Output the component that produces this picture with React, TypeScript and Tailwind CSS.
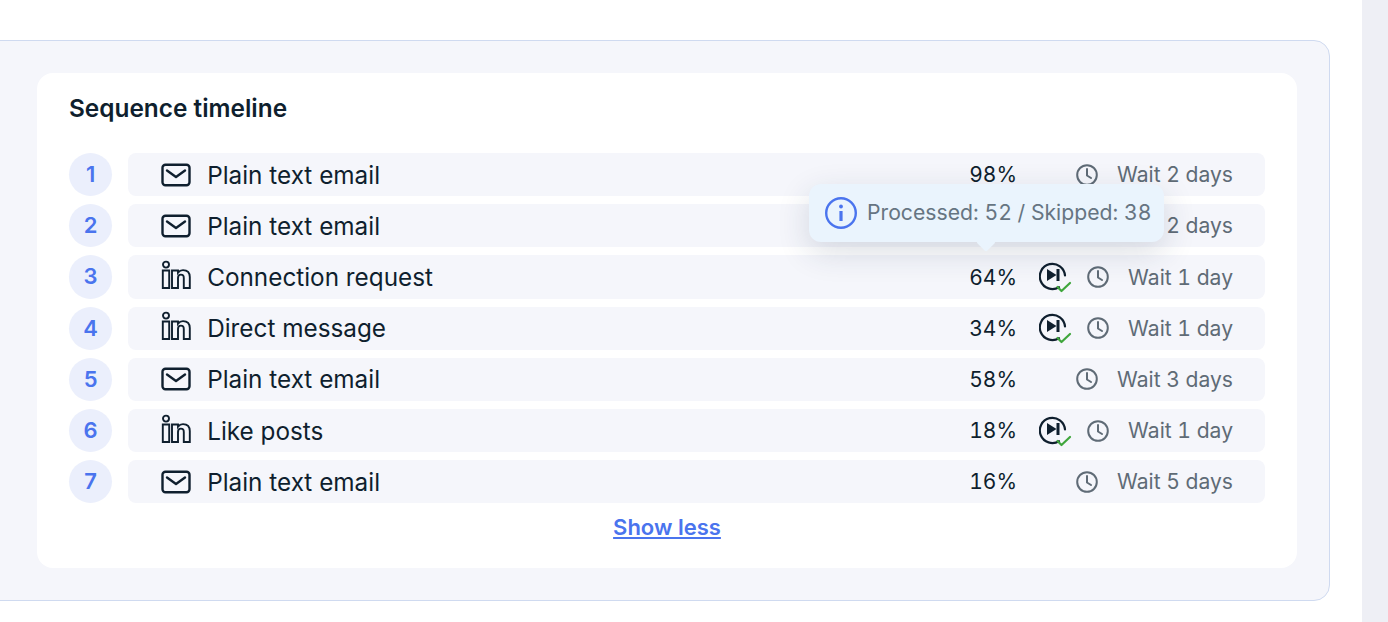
import React from "react";

type Kind = "email" | "linkedin";

interface Step {
  label: string;
  kind: Kind;
  percent: string;
  wait: string;
  skippable?: boolean;
}

const steps: Step[] = [
  { label: "Plain text email", kind: "email", percent: "98%", wait: "Wait 2 days" },
  { label: "Plain text email", kind: "email", percent: "84%", wait: "Wait 2 days" },
  { label: "Connection request", kind: "linkedin", percent: "64%", wait: "Wait 1 day", skippable: true },
  { label: "Direct message", kind: "linkedin", percent: "34%", wait: "Wait 1 day", skippable: true },
  { label: "Plain text email", kind: "email", percent: "58%", wait: "Wait 3 days" },
  { label: "Like posts", kind: "linkedin", percent: "18%", wait: "Wait 1 day", skippable: true },
  { label: "Plain text email", kind: "email", percent: "16%", wait: "Wait 5 days" },
];

const MailIcon = () => (
  <svg width="30" height="24" viewBox="0 0 30 24" fill="none" stroke="#0f1f2e" strokeWidth="2.4">
    <rect x="1.5" y="1.800" width="27" height="20.400" rx="3" />
    <path d="M6 7.500 15 14l9-6.500" strokeLinecap="round" strokeLinejoin="round" />
  </svg>
);

const LinkedinIcon = () => (
  <svg width="30" height="30" viewBox="0 0 30 30" fill="none" stroke="#0f1f2e" strokeWidth="1.900">
    <circle cx="5" cy="4.600" r="3" />
    <path d="M1.800 10.500h6.400V28H1.800z" />
    <path d="M11 10.500h6v2.200c1.200-1.600 3-2.600 5-2.600 4.500 0 6.800 2.600 6.800 7V28h-6V18c0-2.200-1-3.400-2.900-3.400-1.900 0-2.900 1.200-2.900 3.400v10h-6z" />
  </svg>
);

const ClockIcon = () => (
  <svg width="24" height="24" viewBox="0 0 24 24" fill="none" stroke="#5f6b76" strokeWidth="2" strokeLinecap="round" strokeLinejoin="round">
    <circle cx="12" cy="12" r="9.800" />
    <path d="M12 6v6.500l4 2.500" />
  </svg>
);

const SkipDoneIcon = () => (
  <svg width="34" height="32" viewBox="0 0 34 32" fill="none" className="mt-0.5">
    <path d="M20 25.200A12.600 12.600 0 1 1 26 13.500" stroke="#0f1f2e" strokeWidth="2.200" strokeLinecap="round" />
    <path d="M8 7 17.500 13l-9.500 6z" fill="#0f1f2e" />
    <rect x="17.500" y="7" width="3" height="12" fill="#0f1f2e" />
    <path d="M18.500 25l4 4 8.500-8" stroke="#3fa63c" strokeWidth="2.200" strokeLinecap="round" strokeLinejoin="round" />
  </svg>
);

const InfoIcon = () => (
  <svg width="34" height="34" viewBox="0 0 34 34" fill="none" stroke="#4a74ee">
    <circle cx="17" cy="17" r="14.800" strokeWidth="2.400" />
    <circle cx="17" cy="10.500" r="1.900" fill="#4a74ee" stroke="none" />
    <path d="M17 15v10" strokeWidth="3.200" />
  </svg>
);

function StepRow({ step, index }: { step: Step; index: number }) {
  return (
    <div className="flex items-center gap-4">
      <div className="flex h-[43.2px] w-[43.2px] shrink-0 items-center justify-center rounded-full bg-[#ebeffc] text-[22px] font-semibold text-[#4a74ee]">
        {index + 1}
      </div>
      <div className="flex h-[43.2px] flex-1 items-center rounded-lg bg-[#f5f6fb] pl-[33px] pr-8">
        <div className={`flex w-[30px] shrink-0 justify-center ${step.kind === "linkedin" ? "-mt-1" : ""}`}>
          {step.kind === "email" ? <MailIcon /> : <LinkedinIcon />}
        </div>
        <span className="ml-4 pt-[0.5px] text-[24.300px] text-[#0f1f2e]">{step.label}</span>
        <span className="-mr-px ml-auto pt-px text-[21px] tabular-nums text-[#0f1f2e]">{step.percent}</span>
        <div className="flex w-[217px] items-center pl-[23px]">
          {step.skippable && <SkipDoneIcon />}
          <div className="ml-auto flex items-center gap-[18px] text-[21.100px] tabular-nums text-[#5f6b76]">
            <ClockIcon />
            <span className="pt-px">{step.wait}</span>
          </div>
        </div>
      </div>
    </div>
  );
}

export default function App() {
  return (
    <div className="flex h-[622px] overflow-hidden bg-white font-['Inter',sans-serif]">
      <main className="min-w-0 flex-1 pr-8 pt-10">
        <section className="relative -ml-5 h-[561px] rounded-2xl border border-[#cfdaf0] bg-[#f5f6fb] py-8 pl-[56px] pr-8">
          <div className="h-[495px] rounded-2xl bg-white px-8 pt-[19px]">
            <h2 className="text-[24.400px] font-semibold leading-[32px] text-[#0f1f2e]">Sequence timeline</h2>
            <div className="mt-[29px] flex flex-col gap-2">
              {steps.map((step, i) => (
                <StepRow key={i} step={step} index={i} />
              ))}
            </div>
            <div className="mt-2 text-center">
              <a href="#" className="text-[22px] font-semibold text-[#4a74ee] underline">
                Show less
              </a>
            </div>
          </div>

          <div className="absolute left-[828px] top-[143px] flex h-[58px] w-[355px] items-center gap-[9px] rounded-xl bg-[#eaf4fd] pl-[15px] text-[21.200px] text-[#667582] shadow-[0_10px_32px_rgba(30,50,80,0.16)]">
            <InfoIcon />
            <span className="whitespace-nowrap tabular-nums">Processed: 52 / Skipped: 38</span>
            <div className="absolute bottom-[-7px] left-[170px] h-[14px] w-[14px] rotate-45 rounded-[2px] bg-[#eaf4fd]" />
          </div>
        </section>
      </main>
      <aside className="w-[26px] shrink-0 bg-[#eeeff5]" />
    </div>
  );
}
